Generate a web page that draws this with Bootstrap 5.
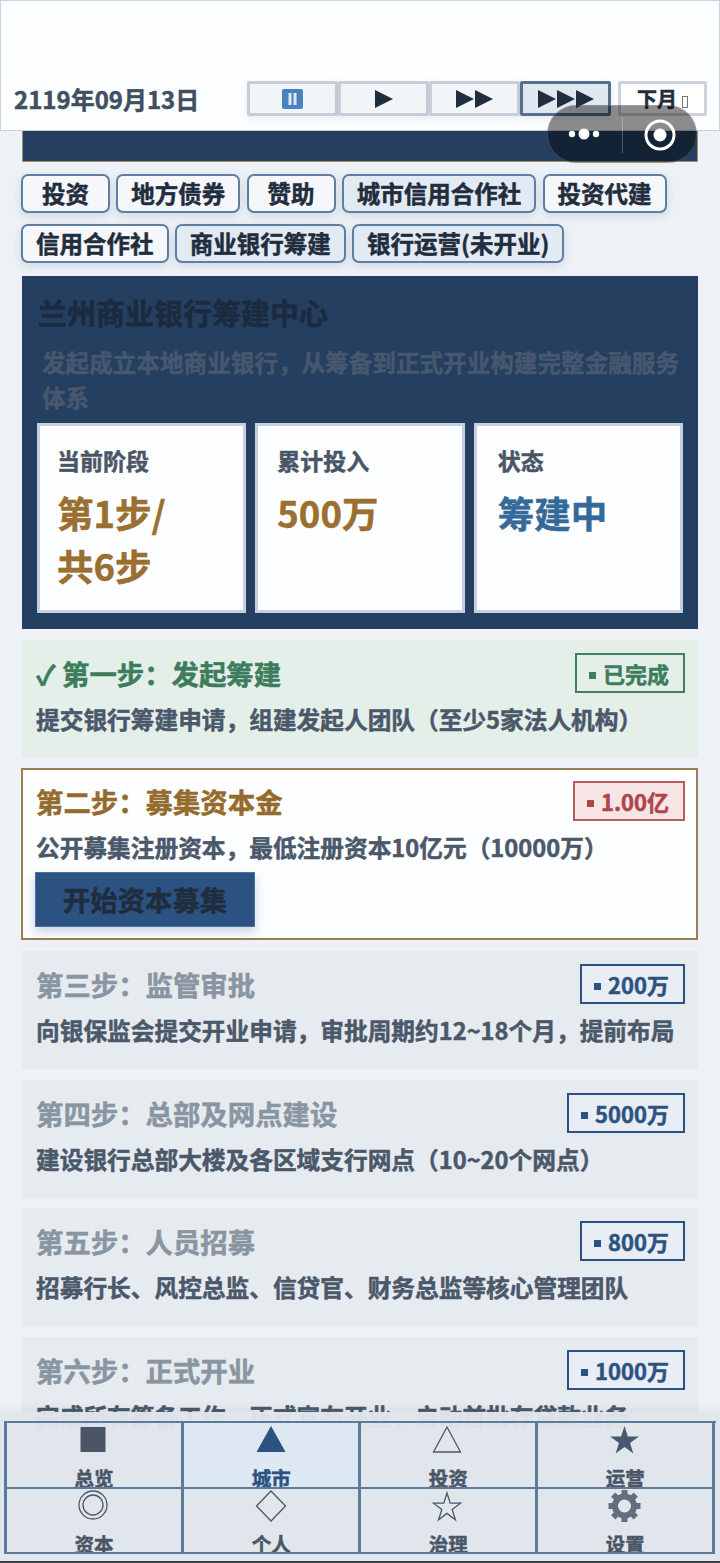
<!DOCTYPE html>
<html lang="zh-CN">
<head>
<meta charset="utf-8">
<title>兰州商业银行筹建中心</title>
<link rel="stylesheet" href="https://cdn.jsdelivr.net/npm/bootstrap@5.3.0/dist/css/bootstrap.min.css">
<style>
html,body{margin:0;height:1563px;overflow:hidden;background:#eef2f7}
body{font-family:"Noto Sans CJK SC",sans-serif;font-weight:700;-webkit-text-stroke:.5px currentColor}
.shell{position:relative;width:720px;height:1563px;overflow:hidden;background:#eef2f7}
.topbar{position:absolute;left:0;right:0;top:0;height:131px;background:#fdfeff;border:1px solid #ccd4de;border-bottom-color:#c9d2dc;padding:80px 12px 0 13px;z-index:5}
.datetxt{font-size:24px;line-height:36px;color:#414f60;width:234px}
.spd{width:91px;height:35px;padding:0;border:3px solid #c7ced8;border-radius:2px;background:#f2f5f8;box-shadow:0 3px 8px rgba(60,80,110,.1)}
.spd.on{background:#dfe8f1;border-color:#566f8f}
.spd svg{display:block;margin:auto}
.nextm{width:89px;height:35px;padding:0;border:3px solid #ccd3dc;border-radius:2px;background:#fff;color:#1f2d3d;font-size:20px;font-weight:700;line-height:29px;margin-left:7px}
.tofu{display:inline-block;width:6px;height:12px;border:1px solid #777;margin-left:5px;vertical-align:-1px}
.capsule{position:absolute;left:547px;top:105px;width:150px;height:58px;border-radius:29px;background:rgba(0,0,0,.45);border:1px solid rgba(255,255,255,.14);z-index:6}
.cap-sep{position:absolute;left:74px;top:11px;width:1px;height:36px;background:rgba(255,255,255,.25)}
.cap-dots{position:absolute;left:19px;top:20px}
.cap-ring{position:absolute;left:96px;top:13px}
.mainarea{padding:0 22px 0 21px}
.banner{height:162px;background:#243f60;border:1px solid #a98d5f;border-top:0;margin-left:1px}
.tagwrap{margin-top:12px;gap:11px 6.25px}
.tagbtn{min-width:89px;height:39px;padding:0 13px;font-size:23.5px;line-height:33px;font-weight:700;color:#1f2d3d;background:#f5f7fa;border:2px solid #5e7fa3;border-radius:7px;box-shadow:0 3px 8px rgba(50,80,120,.16)}
.tagbtn.on{background:#e2eaf3}
.hero{margin:13px 0 0 1px;background:#243f60;padding:13px 15px 16px 15px;height:353px}
.herotitle{font-size:29px;line-height:46px;color:#1b2a3e;margin:0 0 0 1px;font-weight:700}
.herosub{font-size:23.6px;line-height:34.5px;color:#47586e;margin:10px 0 8.5px 5px}
.statgrid{display:grid;grid-template-columns:repeat(3,1fr);gap:9px}
.statbox{height:190px;background:#fdfeff;border:3px solid #c4d0df;padding:17.5px 17px}
.statbox:nth-child(2){padding-left:19px}
.statbox:nth-child(3){padding-left:21px}
.statlbl{font-size:23px;line-height:34px;color:#4a5666}
.statval{font-size:36.5px;line-height:53px;margin-top:9px;color:#9a6f2f}
.statval.blue{color:#356a98}
.stepcard{margin:10.5px 0 0 1px;padding:11px 11px 11.5px 12px;border:2px solid transparent;background:#e6ebf0}
.stepcard.first{margin-top:11px;background:#e5efe9;border-color:#e5efe9;padding-bottom:10.5px}
.stepcard.cur{background:#fdfeff;border-color:#9a7d50;margin-left:0;padding-left:13px;padding-bottom:10.5px}
.stepcard.cur + .stepcard{margin-top:11.5px}
.stephead{height:40px}
.steptitle{font-size:27.4px;line-height:41px;margin:0;color:#8a95a2;font-weight:700;height:40px}
.first .steptitle{color:#3c7d5c}
.cur .steptitle{color:#946b2d}
.stepbadge{height:40px;border:2px solid #2c5282;background:#e8eef4;color:#2c5282;font-size:22px;line-height:36px;padding:0 14px 0 12px;border-radius:0;font-weight:700;white-space:nowrap}
.stepbadge i{display:inline-block;width:7px;height:7px;background:currentColor;margin-right:7px;vertical-align:4px}
.first .stepbadge{border-color:#3f8060;background:#e5efe9;color:#3c7d5c}
.cur .stepbadge{border-color:#b85c5c;background:#f7e4e4;color:#b0444c}
.stepdesc{font-size:23.7px;line-height:34.5px;margin:9px 0 8px;color:#4a586a;white-space:nowrap}
.startbtn{display:block;width:220px;height:55px;margin-left:-1px;padding:0;font-size:27.4px;font-weight:700;color:#1f2d3d;background:#2c5282;border:1px solid #4a72a6;border-radius:0;box-shadow:0 5px 10px rgba(44,82,130,.25)}
.dock{position:absolute;left:0;right:0;top:1412px;height:151px;background:rgba(224,229,236,.97);padding:9px 0 0 4px;border-bottom:2px solid #35404d;z-index:5;box-shadow:0 -3px 8px rgba(60,80,110,.08)}
.docksheet{display:grid;grid-template-columns:repeat(4,177.1px);grid-auto-rows:65.5px;border-left:3px solid #5b7a9c;border-top:2px solid #5b7a9c;width:712px}
.dockcell{overflow:hidden;text-align:center;border-right:3px solid #5b7a9c;border-bottom:2px solid #5b7a9c;color:#4a5666}
.dockcell.on{background:#dde8f2;color:#2c5282}
.dockcell svg{display:block;margin:1px auto 0}
.dockcell span{display:block;font-size:19.5px;line-height:26px;margin-top:5px;color:inherit}
</style>
</head>
<body>
<div class="shell">
  <header class="topbar d-flex align-items-start">
    <div class="datetxt">2119年09月13日</div>
    <div class="d-flex">
      <button class="btn spd" type="button"><svg width="21" height="20" viewBox="0 0 21 20"><rect width="21" height="20" rx="2" fill="#4a82c0"/><rect x="6.500" y="4" width="3" height="12" fill="#dfe9f4"/><rect x="11.500" y="4" width="3" height="12" fill="#dfe9f4"/></svg></button>
      <button class="btn spd" type="button"><svg width="18" height="18" viewBox="0 0 18 18"><path d="M0 0l18 9-18 9z" fill="#1f2d3d"/></svg></button>
      <button class="btn spd" type="button"><svg width="37" height="18" viewBox="0 0 37 18"><path d="M0 0l18 9-18 9zM19 0l18 9-18 9z" fill="#1f2d3d"/></svg></button>
      <button class="btn spd on" type="button"><svg width="56" height="18" viewBox="0 0 56 18"><path d="M0 0l18 9-18 9zM19 0l18 9-18 9zM38 0l18 9-18 9z" fill="#1f2d3d"/></svg></button>
      <button class="btn nextm" type="button">下月<span class="tofu"></span></button>
    </div>
  </header>
  <div class="capsule">
    <svg class="cap-dots" width="36" height="16" viewBox="0 0 36 16"><circle cx="5" cy="8" r="3.200" fill="#fff"/><circle cx="17" cy="8" r="5.500" fill="#fff"/><circle cx="29" cy="8" r="3.200" fill="#fff"/></svg>
    <div class="cap-sep"></div>
    <svg class="cap-ring" width="32" height="32" viewBox="0 0 32 32"><circle cx="16" cy="16" r="14" fill="none" stroke="#fff" stroke-width="3"/><circle cx="16" cy="16" r="6.500" fill="#fff"/></svg>
  </div>

  <main class="mainarea">
    <div class="banner"></div>
    <div class="tagwrap d-flex flex-wrap">
      <button class="btn tagbtn" type="button">投资</button>
      <button class="btn tagbtn" type="button">地方债券</button>
      <button class="btn tagbtn" type="button">赞助</button>
      <button class="btn tagbtn on" type="button">城市信用合作社</button>
      <button class="btn tagbtn" type="button">投资代建</button>
      <button class="btn tagbtn" type="button">信用合作社</button>
      <button class="btn tagbtn on" type="button">商业银行筹建</button>
      <button class="btn tagbtn on" type="button">银行运营(未开业)</button>
    </div>

    <section class="hero">
      <h2 class="herotitle">兰州商业银行筹建中心</h2>
      <p class="herosub">发起成立本地商业银行，从筹备到正式开业构建完整金融服务体系</p>
      <div class="statgrid">
        <div class="statbox"><div class="statlbl">当前阶段</div><div class="statval">第1步/<br>共6步</div></div>
        <div class="statbox"><div class="statlbl">累计投入</div><div class="statval">500万</div></div>
        <div class="statbox"><div class="statlbl">状态</div><div class="statval blue">筹建中</div></div>
      </div>
    </section>

    <article class="stepcard first">
      <div class="stephead d-flex justify-content-between"><h3 class="steptitle">✓ 第一步：发起筹建</h3><div class="stepbadge"><i></i>已完成</div></div>
      <p class="stepdesc">提交银行筹建申请，组建发起人团队（至少5家法人机构）</p>
    </article>
    <article class="stepcard cur">
      <div class="stephead d-flex justify-content-between"><h3 class="steptitle">第二步：募集资本金</h3><div class="stepbadge"><i></i>1.00亿</div></div>
      <p class="stepdesc">公开募集注册资本，最低注册资本10亿元（10000万）</p>
      <button class="btn startbtn" type="button">开始资本募集</button>
    </article>
    <article class="stepcard">
      <div class="stephead d-flex justify-content-between"><h3 class="steptitle">第三步：监管审批</h3><div class="stepbadge"><i></i>200万</div></div>
      <p class="stepdesc">向银保监会提交开业申请，审批周期约12~18个月，提前布局</p>
    </article>
    <article class="stepcard">
      <div class="stephead d-flex justify-content-between"><h3 class="steptitle">第四步：总部及网点建设</h3><div class="stepbadge"><i></i>5000万</div></div>
      <p class="stepdesc">建设银行总部大楼及各区域支行网点（10~20个网点）</p>
    </article>
    <article class="stepcard">
      <div class="stephead d-flex justify-content-between"><h3 class="steptitle">第五步：人员招募</h3><div class="stepbadge"><i></i>800万</div></div>
      <p class="stepdesc">招募行长、风控总监、信贷官、财务总监等核心管理团队</p>
    </article>
    <article class="stepcard">
      <div class="stephead d-flex justify-content-between"><h3 class="steptitle">第六步：正式开业</h3><div class="stepbadge"><i></i>1000万</div></div>
      <p class="stepdesc">完成所有筹备工作，正式宣布开业，启动首批存贷款业务</p>
    </article>
  </main>

  <nav class="dock">
    <div class="docksheet">
      <div class="dockcell"><svg width="40" height="36" viewBox="0 0 40 36"><rect x="6.500" y="3" width="25" height="25" fill="#4a5666"/></svg><span>总览</span></div>
      <div class="dockcell on"><svg width="40" height="36" viewBox="0 0 40 36"><path d="M20 2l14.500 26h-29z" fill="#2c5282"/></svg><span>城市</span></div>
      <div class="dockcell"><svg width="40" height="36" viewBox="0 0 40 36"><path d="M19 3l13.500 25h-27z" fill="none" stroke="#4a5666" stroke-width="1.300"/></svg><span>投资</span></div>
      <div class="dockcell"><svg width="40" height="36" viewBox="0 0 40 36"><path d="M19.500 2l3.400 10.500H34l-9 6.500 3.400 10.500-8.900-6.500-8.900 6.500L14 19l-9-6.500h11.100z" fill="#4a5a6e"/></svg><span>运营</span></div>
      <div class="dockcell"><svg width="40" height="36" viewBox="0 0 40 36"><circle cx="19" cy="15" r="14" fill="none" stroke="#4a5666" stroke-width="1.300"/><circle cx="19" cy="15" r="10" fill="none" stroke="#4a5666" stroke-width="1.300"/></svg><span>资本</span></div>
      <div class="dockcell"><svg width="40" height="36" viewBox="0 0 40 36"><path d="M20 1l14.500 15-14.500 15-14.500-15z" fill="none" stroke="#4a5666" stroke-width="1.300"/></svg><span>个人</span></div>
      <div class="dockcell"><svg width="40" height="36" viewBox="0 0 40 36"><path d="M19 3l3.200 10.200h10.300l-8.300 6.300 3.200 10.200-8.400-6.300-8.400 6.300 3.200-10.200-8.300-6.300h10.300z" fill="none" stroke="#4a5666" stroke-width="1.300"/></svg><span>治理</span></div>
      <div class="dockcell"><svg width="40" height="36" viewBox="0 0 40 36"><g fill="#626e7c" transform="translate(3.500 0)"><rect x="13" y="0" width="6" height="7"/><rect x="13" y="0" width="6" height="7" transform="rotate(45 16 16)"/><rect x="13" y="0" width="6" height="7" transform="rotate(90 16 16)"/><rect x="13" y="0" width="6" height="7" transform="rotate(135 16 16)"/><rect x="13" y="0" width="6" height="7" transform="rotate(180 16 16)"/><rect x="13" y="0" width="6" height="7" transform="rotate(225 16 16)"/><rect x="13" y="0" width="6" height="7" transform="rotate(270 16 16)"/><rect x="13" y="0" width="6" height="7" transform="rotate(315 16 16)"/></g><circle cx="19.500" cy="16" r="9.500" fill="none" stroke="#626e7c" stroke-width="6"/></svg><span>设置</span></div>
    </div>
  </nav>
</div>
<script src="https://cdn.jsdelivr.net/npm/bootstrap@5.3.0/dist/js/bootstrap.bundle.min.js"></script>
</body>
</html>
